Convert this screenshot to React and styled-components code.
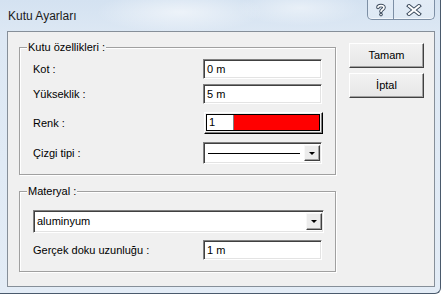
import React from 'react';
import styled, { createGlobalStyle } from 'styled-components';

const Global = createGlobalStyle`
  html, body { margin: 0; padding: 0; background: #ffffff; }
  body { font-family: "Liberation Sans", Arial, sans-serif; font-size: 11px; color: #000; }
  #root { width: 443px; height: 295px; overflow: hidden; }
  * { box-sizing: border-box; }
`;

const Frame = styled.div`
  width: 441px;
  height: 294px;
  border-right: 1px solid #4a5a6c;
  border-bottom: 1px solid #4a5a6c;
  border-bottom-right-radius: 6px;
  background:
    radial-gradient(ellipse 120px 30px at 180px 12px, rgba(255,255,255,0.55), rgba(255,255,255,0) 70%),
    radial-gradient(ellipse 90px 25px at 300px 8px, rgba(255,255,255,0.45), rgba(255,255,255,0) 70%),
    linear-gradient(180deg, #d4e2f1 0%, #dde8f4 12%, #e3ecf6 100%);
  display: flex;
  flex-direction: column;
  padding: 0 5px 6px 7px;
`;

const TitleBar = styled.div`
  height: 31px;
  display: flex;
  justify-content: space-between;
  align-items: flex-start;
`;

const Title = styled.div`
  font-family: "Liberation Sans", Arial, sans-serif;
  font-size: 12px;
  color: #1b1b1b;
  padding: 9px 0 0 1px;
`;

const Captions = styled.div`
  display: flex;
  height: 20px;
`;

const CapBtn = styled.div`
  width: ${p => p.$w}px;
  height: 20px;
  display: flex;
  align-items: center;
  justify-content: center;
  border: 1px solid #7d8fa5;
  border-top: none;
  border-left-width: ${p => (p.$first ? 1 : 0)}px;
  border-bottom-left-radius: ${p => (p.$first ? 5 : 0)}px;
  border-bottom-right-radius: ${p => (p.$first ? 0 : 5)}px;
  background: linear-gradient(180deg, rgba(255,255,255,0.35), rgba(255,255,255,0.15));
  box-shadow: inset 0 -1px 0 rgba(255,255,255,0.6);
`;

const Client = styled.div`
  flex: 1;
  border: 1px solid #868f99;
  background: #f0f0f0;
  display: flex;
  gap: 13px;
  padding: 11px 10px 0 11px;
`;

const LeftCol = styled.div`
  width: 317px;
  padding-top: 4px;
  display: flex;
  flex-direction: column;
  gap: 16px;
`;

const Group = styled.div`
  position: relative;
  border: 1px solid #a0a0a0;
  box-shadow: inset 1px 1px 0 #ffffff, 1px 1px 0 #ffffff;
  padding: ${p => p.$pt}px 11px ${p => p.$pb}px 13px;
  display: flex;
  flex-direction: column;
`;

const Legend = styled.span`
  position: absolute;
  top: -7px;
  left: 7px;
  padding: 0 1px;
  background: #f0f0f0;
  line-height: 13px;
`;

const Row = styled.div`
  display: grid;
  grid-template-columns: 170px 119px;
  align-items: center;
  margin-top: ${p => p.$mt || 0}px;
`;

const Label = styled.span`
  line-height: 13px;
`;

const sunken = `
  border-style: solid;
  border-width: 1px;
  border-color: #808080 #ffffff #ffffff #808080;
  box-shadow: inset 1px 1px 0 #404040, inset -1px -1px 0 #e3e3e3;
  background: #ffffff;
`;

const TextBox = styled.div`
  ${sunken}
  height: 20px;
  padding: 0 0 0 3px;
  display: flex;
  align-items: center;
  line-height: 13px;
`;

const ColorBox = styled.div`
  height: 22px;
  width: 119px;
  margin-left: 1px;
  border-style: solid;
  border-width: 1px;
  border-color: #ffffff #000000 #000000 #ffffff;
  box-shadow: inset -1px -1px 0 #808080;
  padding: 1px 2px 2px 1px;
  display: flex;
`;

const ColorInner = styled.div`
  flex: 1;
  border: 1px solid #000;
  display: flex;
`;

const ColorIndex = styled.div`
  width: 27px;
  background: #fff;
  border-right: 1px solid #808080;
  padding-left: 2px;
  display: flex;
  align-items: center;
  line-height: 13px;
`;

const Swatch = styled.div`
  flex: 1;
  background: ${p => p.$color};
`;

const Combo = styled.div`
  ${sunken}
  height: ${p => p.$h}px;
  width: ${p => p.$w}px;
  display: flex;
  align-items: center;
  padding: 2px 1px 2px 2px;
`;

const ComboValue = styled.div`
  flex: 1;
  padding-left: 1px;
  line-height: 13px;
  display: flex;
  align-items: center;
  height: 100%;
`;

const LineSample = styled.div`
  width: 92px;
  height: 1px;
  background: #000;
  margin-left: 1px;
`;

const DropBtn = styled.div`
  width: 16px;
  height: 100%;
  background: #ececec;
  border-style: solid;
  border-width: 1px;
  border-color: #f8f8f8 #404040 #404040 #f8f8f8;
  box-shadow: inset -1px -1px 0 #a0a0a0;
  display: flex;
  align-items: center;
  justify-content: center;
`;

const Arrow = styled.div`
  width: 0;
  height: 0;
  border-left: 3px solid transparent;
  border-right: 3px solid transparent;
  border-top: 3px solid #000;
`;

const RightCol = styled.div`
  display: flex;
  flex-direction: column;
  gap: 5px;
`;

const Button = styled.div`
  width: 75px;
  height: 25px;
  display: flex;
  align-items: center;
  justify-content: center;
  background: linear-gradient(180deg, #f2f2f2, #e6e6e6);
  border-style: solid;
  border-width: 1px;
  border-color: #ffffff #404040 #404040 #ffffff;
  box-shadow: inset -1px -1px 0 #a0a0a0;
  line-height: 13px;
`;

const HelpIcon = () => (
  <svg width="12" height="14" viewBox="0 0 12 14">
    <path d="M3 4.5 C3 2 9 2 9 4.5 C9 6.5 6 6.5 6 8.5" fill="none" stroke="#3b4a5c" strokeWidth="3.6" strokeLinecap="round" />
    <path d="M3 4.5 C3 2 9 2 9 4.5 C9 6.5 6 6.5 6 8.5" fill="none" stroke="#ffffff" strokeWidth="1.6" strokeLinecap="round" />
    <circle cx="6" cy="11.6" r="1.8" fill="#3b4a5c" />
    <circle cx="6" cy="11.6" r="0.8" fill="#ffffff" />
  </svg>
);

const CloseIcon = () => (
  <svg width="16" height="12" viewBox="0 0 16 12">
    <path d="M3 2 L13 10 M13 2 L3 10" stroke="#3b4a5c" strokeWidth="4" strokeLinecap="square" />
    <path d="M3 2 L13 10 M13 2 L3 10" stroke="#ffffff" strokeWidth="2" strokeLinecap="square" />
  </svg>
);

export default function App() {
  return (
    <>
      <Global />
      <Frame>
        <TitleBar>
          <Title>Kutu Ayarları</Title>
          <Captions>
            <CapBtn $w={27} $first><HelpIcon /></CapBtn>
            <CapBtn $w={41}><CloseIcon /></CapBtn>
          </Captions>
        </TitleBar>
        <Client>
          <LeftCol>
            <Group $pt={11} $pb={10}>
              <Legend>Kutu özellikleri :</Legend>
              <Row>
                <Label>Kot :</Label>
                <TextBox>0 m</TextBox>
              </Row>
              <Row $mt={5}>
                <Label>Yükseklik :</Label>
                <TextBox>5 m</TextBox>
              </Row>
              <Row $mt={8}>
                <Label>Renk :</Label>
                <ColorBox>
                  <ColorInner>
                    <ColorIndex>1</ColorIndex>
                    <Swatch $color="#ff0000" />
                  </ColorInner>
                </ColorBox>
              </Row>
              <Row $mt={8}>
                <Label>Çizgi tipi :</Label>
                <Combo $h={22} $w={119}>
                  <ComboValue><LineSample /></ComboValue>
                  <DropBtn><Arrow /></DropBtn>
                </Combo>
              </Row>
            </Group>
            <Group $pt={18} $pb={11}>
              <Legend>Materyal :</Legend>
              <Combo $h={23} $w={291}>
                <ComboValue>aluminyum</ComboValue>
                <DropBtn><Arrow /></DropBtn>
              </Combo>
              <Row $mt={7}>
                <Label>Gerçek doku uzunluğu :</Label>
                <TextBox>1 m</TextBox>
              </Row>
            </Group>
          </LeftCol>
          <RightCol>
            <Button>Tamam</Button>
            <Button>İptal</Button>
          </RightCol>
        </Client>
      </Frame>
    </>
  );
}
